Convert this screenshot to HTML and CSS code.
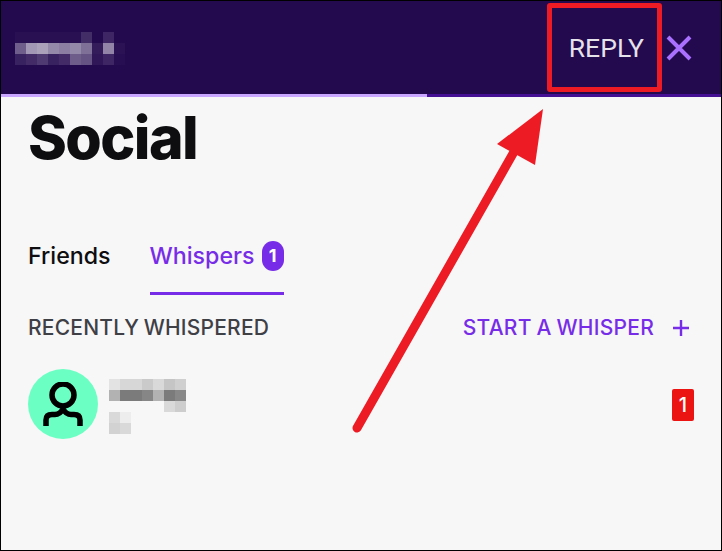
FILE: index.html
```html
<!DOCTYPE html>
<html lang="en">
<head>
    <meta charset="UTF-8">
    <meta name="viewport" content="width=device-width, initial-scale=1.0">
    <title>Social</title>
    <link rel="stylesheet" href="styles.css">
</head>
<body>
    <div class="frame">
        <!-- Top bar -->
        <header class="topbar">
            <svg class="blur-name" width="121" height="33" viewBox="0 0 11 3" shape-rendering="crispEdges">
                <g fill="#fff">
                    <rect x="0" y="0" width="7" height="1" opacity=".03"/>
                    <rect x="6" y="0" width="1" height="1" opacity=".12"/>
                    <rect x="8" y="0" width="1" height="1" opacity=".12"/>
                    <rect x="0" y="1" width="1" height="1" opacity=".35"/>
                    <rect x="1" y="1" width="1" height="1" opacity=".58"/>
                    <rect x="2" y="1" width="1" height="1" opacity=".62"/>
                    <rect x="3" y="1" width="1" height="1" opacity=".52"/>
                    <rect x="4" y="1" width="1" height="1" opacity=".48"/>
                    <rect x="5" y="1" width="1" height="1" opacity=".52"/>
                    <rect x="6" y="1" width="1" height="1" opacity=".42"/>
                    <rect x="7" y="1" width="1" height="1" opacity=".08"/>
                    <rect x="8" y="1" width="1" height="1" opacity=".5"/>
                    <rect x="9" y="1" width="1" height="1" opacity=".04"/>
                    <rect x="0" y="2" width="1" height="1" opacity=".1"/>
                    <rect x="1" y="2" width="1" height="1" opacity=".14"/>
                    <rect x="2" y="2" width="1" height="1" opacity=".2"/>
                    <rect x="3" y="2" width="1" height="1" opacity=".1"/>
                    <rect x="4" y="2" width="1" height="1" opacity=".14"/>
                    <rect x="5" y="2" width="1" height="1" opacity=".34"/>
                    <rect x="6" y="2" width="1" height="1" opacity=".3"/>
                    <rect x="7" y="2" width="1" height="1" opacity=".06"/>
                    <rect x="8" y="2" width="1" height="1" opacity=".12"/>
                    <rect x="9" y="2" width="1" height="1" opacity=".02"/>
                </g>
            </svg>
            <div class="topbar-actions">
                <span class="reply">REPLY</span>
                <svg class="close-icon" width="26" height="26" viewBox="0 0 26 26">
                    <path d="M2 2 L24 24 M24 2 L2 24" stroke="#a970ff" stroke-width="4" fill="none"/>
                </svg>
            </div>
        </header>
        <div class="progress"><div class="progress-fill"></div></div>

        <main class="content">
            <h1 class="title">Social</h1>

            <nav class="tabs">
                <a class="tab">Friends</a>
                <a class="tab tab-active">Whispers <span class="tab-count">1</span></a>
            </nav>

            <div class="section-head">
                <span class="section-title">RECENTLY WHISPERED</span>
                <a class="start-link">
                    START A WHISPER
                    <svg width="16" height="16" viewBox="0 0 16 16">
                        <path d="M8 0 V16 M0 8 H16" stroke="#772ce8" stroke-width="2.4" fill="none"/>
                    </svg>
                </a>
            </div>

            <div class="whisper-row">
                <div class="avatar">
                    <svg width="40" height="44" viewBox="0 0 40 44">
                        <circle cx="20" cy="13" r="11" stroke="#000" stroke-width="5.5" fill="none"/>
                        <path d="M3 44 V38 Q3 32.5 9 32.5 H12 Q17 32.5 20 27 Q23 32.5 28 32.5 H31 Q37 32.5 37 38 V44" stroke="#000" stroke-width="5.5" fill="none"/>
                    </svg>
                </div>
                <svg class="blur-user" width="77" height="55" viewBox="0 0 7 5" shape-rendering="crispEdges">
                    <g fill="#000">
                        <rect x="0" y="0" width="1" height="1" opacity=".08"/>
                        <rect x="1" y="0" width="2" height="1" opacity=".13"/>
                        <rect x="3" y="0" width="1" height="1" opacity=".18"/>
                        <rect x="4" y="0" width="1" height="1" opacity=".12"/>
                        <rect x="5" y="0" width="1" height="1" opacity=".2"/>
                        <rect x="6" y="0" width="1" height="1" opacity=".16"/>
                        <rect x="0" y="1" width="1" height="1" opacity=".28"/>
                        <rect x="1" y="1" width="2" height="1" opacity=".5"/>
                        <rect x="3" y="1" width="1" height="1" opacity=".46"/>
                        <rect x="4" y="1" width="1" height="1" opacity=".28"/>
                        <rect x="5" y="1" width="1" height="1" opacity=".5"/>
                        <rect x="6" y="1" width="1" height="1" opacity=".45"/>
                        <rect x="5" y="2" width="1" height="1" opacity=".12"/>
                        <rect x="6" y="2" width="1" height="1" opacity=".17"/>
                        <rect x="0" y="3" width="1" height="1" opacity=".12"/>
                        <rect x="1" y="3" width="1" height="1" opacity=".04"/>
                        <rect x="0" y="4" width="1" height="1" opacity=".15"/>
                        <rect x="1" y="4" width="1" height="1" opacity=".12"/>
                    </g>
                </svg>
                <span class="unread">1</span>
            </div>
        </main>

        <!-- Annotation drawn over the screenshot -->
        <div class="reply-box"></div>
        <svg class="arrow" width="722" height="551" viewBox="0 0 722 551">
            <path d="M357 428 L515 150" stroke="#ed1c24" stroke-width="9" stroke-linecap="round" fill="none"/>
            <path d="M543 109 L497 144 L535 165 Z" fill="#ed1c24"/>
        </svg>
    </div>
</body>
</html>
```

FILE: styles.css
```css
* {
    box-sizing: border-box;
}

body {
    margin: 0;
    font-family: 'Inter', sans-serif;
}

.frame {
    position: relative;
    width: 722px;
    height: 551px;
    border: 1px solid #000;
    background: #f7f7f8;
    overflow: hidden;
}

.topbar {
    display: flex;
    justify-content: space-between;
    align-items: center;
    height: 93px;
    padding: 0 29px 0 14px;
    background: #23094e;
}

.blur-name {
    margin-top: 2px;
}

.topbar-actions {
    display: flex;
    align-items: center;
    gap: 22px;
}

.reply {
    font-family: 'Roboto', sans-serif;
    font-size: 26.5px;
    color: #e5e2ea;
}

.close-icon {
    display: block;
}

.progress {
    height: 3px;
    background: #451093;
}

.progress-fill {
    width: 426px;
    height: 100%;
    background: #c9a6ff;
}

.content {
    padding: 0 27px;
}

.title {
    margin: 5px 0 0;
    font-size: 59px;
    font-weight: 800;
    line-height: 72px;
    letter-spacing: -1.6px;
    color: #0e0e10;
}

.tabs {
    display: flex;
    gap: 39px;
    margin-top: 64px;
}

.tab {
    display: flex;
    align-items: flex-start;
    gap: 7px;
    height: 57px;
    padding-top: 3px;
    font-size: 23.2px;
    font-weight: 500;
    line-height: 30px;
    color: #0e0e10;
}

.tab-active {
    color: #772ce8;
    border-bottom: 3px solid #772ce8;
}

.tab-count {
    width: 22px;
    height: 30px;
    border-radius: 11px;
    background: #772ce8;
    color: #fff;
    font-size: 18px;
    font-weight: 700;
    text-align: center;
}

.section-head {
    display: flex;
    justify-content: space-between;
    align-items: center;
    margin-top: 20px;
}

.section-title {
    font-size: 21px;
    font-weight: 500;
    letter-spacing: .2px;
    word-spacing: -1px;
    color: #3f3f46;
}

.start-link {
    display: flex;
    align-items: center;
    gap: 19px;
    padding-right: 5px;
    font-size: 21px;
    font-weight: 500;
    letter-spacing: .25px;
    word-spacing: -1px;
    color: #772ce8;
}

.whisper-row {
    display: flex;
    align-items: flex-start;
    margin-top: 29px;
}

.avatar {
    display: flex;
    justify-content: center;
    align-items: center;
    width: 70px;
    height: 70px;
    border-radius: 50%;
    background: #6bffc3;
}

.blur-user {
    margin: 10px 0 0 11px;
}

.unread {
    margin: 20px 0 0 auto;
    width: 22px;
    height: 32px;
    border-radius: 2px;
    background: #ec1313;
    color: #fff;
    font-size: 20px;
    font-weight: 500;
    line-height: 32px;
    text-align: center;
}

.reply-box {
    position: absolute;
    left: 546px;
    top: 2px;
    width: 115px;
    height: 89px;
    border: 5px solid #ed1c24;
    border-radius: 3px;
}

.arrow {
    position: absolute;
    left: -1px;
    top: -1px;
}
```
